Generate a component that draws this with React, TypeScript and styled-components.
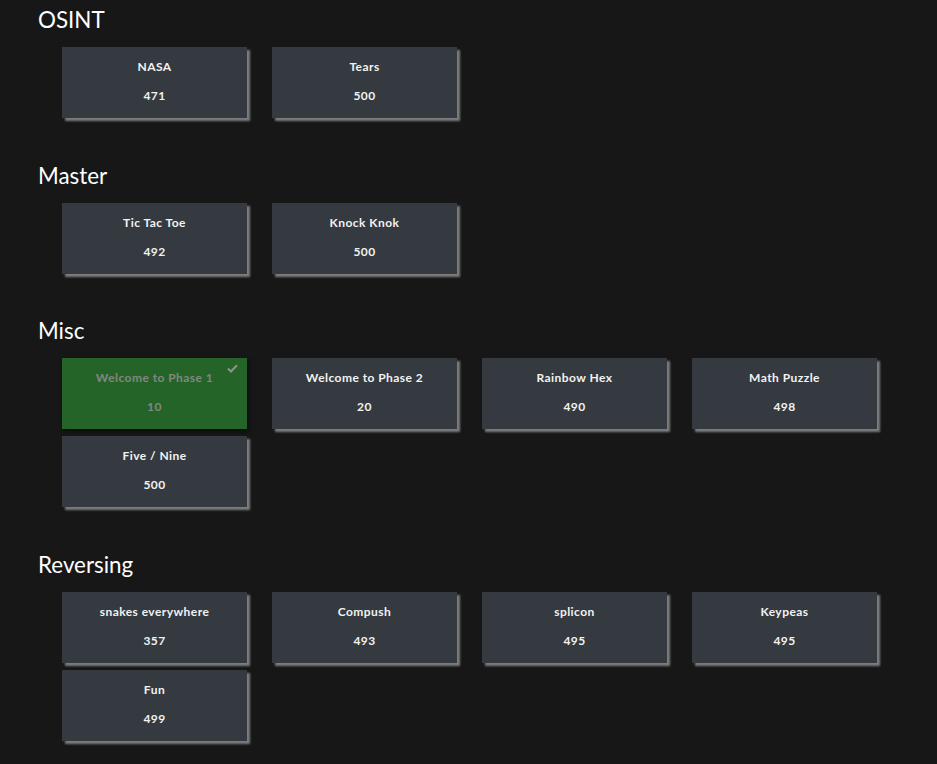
import React from "react";
import styled, { createGlobalStyle } from "styled-components";

const Global = createGlobalStyle`
  html, body { margin: 0; padding: 0; background: #171717; }
  body { font-family: Lato, "Noto Sans", sans-serif; color: #fff; }
`;

const Page = styled.div`
  padding: 5px 0 20px 38px;
`;

const Section = styled.section`
  margin-bottom: 42.6px;
`;

const Heading = styled.h3`
  margin: 0 0 13px 0;
  font-size: 22.4px;
  font-weight: 400;
  line-height: 29px;
  color: #fff;
`;

const Grid = styled.div`
  display: grid;
  grid-template-columns: repeat(4, 185px);
  column-gap: 25px;
  row-gap: 7px;
  padding-left: 24px;
`;

const Card = styled.div<{ $solved?: boolean }>`
  position: relative;
  height: 71px;
  box-sizing: border-box;
  padding: 13px 0;
  display: flex;
  flex-direction: column;
  align-items: center;
  gap: 15px;
  background: ${(p) => (p.$solved ? "#256428" : "#343a40")};
  color: ${(p) => (p.$solved ? "#828782" : "#f2f2f2")};
  box-shadow: ${(p) => (p.$solved ? "2px 3px 4px #0e0e0e" : "3px 3px 2px #7c7c7c")};
  font-size: 12px;
  font-weight: 700;
  letter-spacing: 0.45px;
`;

const Line = styled.div`
  line-height: 14px;
`;

const Check = styled.svg`
  position: absolute;
  top: 6px;
  right: 9px;
  width: 11px;
  height: 9px;
`;

type Chal = { name: string; pts: number; solved?: boolean };

const data: { title: string; items: Chal[] }[] = [
  { title: "OSINT", items: [{ name: "NASA", pts: 471 }, { name: "Tears", pts: 500 }] },
  { title: "Master", items: [{ name: "Tic Tac Toe", pts: 492 }, { name: "Knock Knok", pts: 500 }] },
  {
    title: "Misc",
    items: [
      { name: "Welcome to Phase 1", pts: 10, solved: true },
      { name: "Welcome to Phase 2", pts: 20 },
      { name: "Rainbow Hex", pts: 490 },
      { name: "Math Puzzle", pts: 498 },
      { name: "Five / Nine", pts: 500 },
    ],
  },
  {
    title: "Reversing",
    items: [
      { name: "snakes everywhere", pts: 357 },
      { name: "Compush", pts: 493 },
      { name: "splicon", pts: 495 },
      { name: "Keypeas", pts: 495 },
      { name: "Fun", pts: 499 },
    ],
  },
];

export default function App() {
  return (
    <Page>
      <Global />
      {data.map((s) => (
        <Section key={s.title}>
          <Heading>{s.title}</Heading>
          <Grid>
            {s.items.map((c) => (
              <Card key={c.name} $solved={c.solved}>
                {c.solved && (
                  <Check viewBox="0 0 11 9">
                    <path d="M1 4.5 L4 7.5 L10 1.2" stroke="#8a958a" strokeWidth="2" fill="none" />
                  </Check>
                )}
                <Line>{c.name}</Line>
                <Line>{c.pts}</Line>
              </Card>
            ))}
          </Grid>
        </Section>
      ))}
    </Page>
  );
}
